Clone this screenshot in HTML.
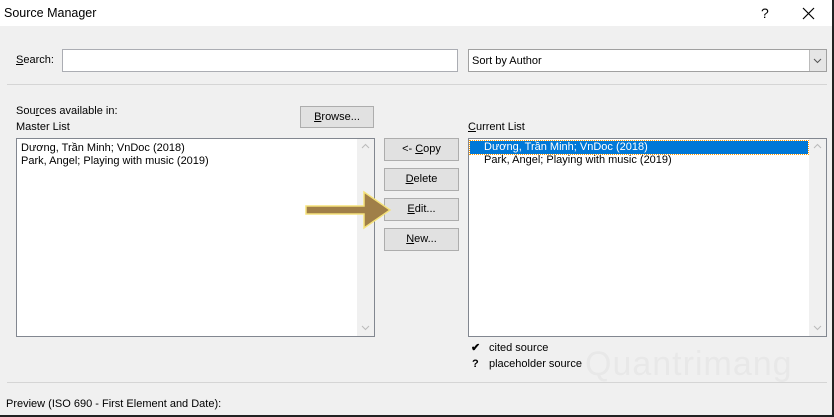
<!DOCTYPE html><html><head><style>
*{margin:0;padding:0;box-sizing:border-box}
body{width:834px;height:417px;overflow:hidden;background:#f0f0f0;font-family:"Liberation Sans",sans-serif;font-size:11px;color:#000;position:relative}
.a{position:absolute}
.win{position:absolute;left:0;top:0;width:834px;height:417px;border-right:2px solid #222;border-bottom:2px solid #222}
.btn{position:absolute;background:#e1e1e1;border:1px solid #adadad;text-align:center;line-height:21px}
.box{position:absolute;background:#fff;border:1px solid #abadb3}
u{text-decoration:underline}
</style></head><body>
<div class="a" style="left:0;top:0;width:834px;height:26px;background:#fff"></div>
<div class="a" style="left:4px;top:6px;font-size:12.5px">Source Manager</div>
<div class="a" style="left:761px;top:5px;font-size:14px">?</div>
<svg class="a" style="left:802px;top:7px" width="13" height="13"><path d="M1 1L12 12M12 1L1 12" stroke="#000" stroke-width="1.2"/></svg>
<div class="a" style="left:16px;top:54px"><u>S</u>earch:</div>
<div class="box" style="left:62px;top:49px;width:396px;height:23px"></div>
<div class="box" style="left:468px;top:49px;width:359px;height:23px;border-color:#a0a0a0"><span style="position:absolute;left:3px;top:5px">Sort by Author</span>
<div class="a" style="right:0;top:0;width:17px;height:21px;background:#e5e5e5;border-left:1px solid #bbb"></div>
<svg class="a" style="right:4px;top:8px" width="9" height="6"><path d="M1 1L4.5 4.5L8 1" stroke="#555" fill="none"/></svg></div>
<div class="a" style="left:7px;top:84px;width:820px;height:1px;background:#d5d5d5"></div>
<div class="a" style="left:16px;top:105px">Sou<u>r</u>ces available in:</div>
<div class="a" style="left:16px;top:121px">Master List</div>
<div class="btn" style="left:300px;top:106px;width:74px;height:22px"><u>B</u>rowse...</div>
<div class="box" style="left:16px;top:138px;width:359px;height:199px;border-color:#828790">
<div class="a" style="left:4px;top:3px;line-height:13px">Dương, Trần Minh; VnDoc (2018)<br>Park, Angel; Playing with music (2019)</div>
<div class="a" style="right:0;top:0;width:17px;height:197px;background:#f0f0f0"></div>
<svg class="a" style="right:4px;top:4px" width="9" height="6"><path d="M1 5L4.5 1.5L8 5" stroke="#bbb" fill="none"/></svg>
<svg class="a" style="right:4px;bottom:5px" width="9" height="6"><path d="M1 1L4.5 4.5L8 1" stroke="#bbb" fill="none"/></svg></div>
<div class="btn" style="left:384px;top:138px;width:75px;height:23px">&lt;- <u>C</u>opy</div>
<div class="btn" style="left:384px;top:168px;width:75px;height:23px"><u>D</u>elete</div>
<div class="btn" style="left:384px;top:198px;width:75px;height:23px"><u>E</u>dit...</div>
<div class="btn" style="left:384px;top:228px;width:75px;height:23px"><u>N</u>ew...</div>
<div class="a" style="left:468px;top:121px"><u>C</u>urrent List</div>
<div class="box" style="left:468px;top:138px;width:359px;height:199px;border-color:#828790">
<div class="a" style="left:1px;top:2px;width:338px;height:13px;background:#0078d7;outline:1px dotted #f90"></div>
<div class="a" style="left:15px;top:2px;line-height:13px"><span style="color:#fff">Dương, Trần Minh; VnDoc (2018)</span><br>Park, Angel; Playing with music (2019)</div>
<div class="a" style="right:0;top:0;width:17px;height:197px;background:#f0f0f0"></div>
<svg class="a" style="right:4px;top:4px" width="9" height="6"><path d="M1 5L4.5 1.5L8 5" stroke="#bbb" fill="none"/></svg>
<svg class="a" style="right:4px;bottom:5px" width="9" height="6"><path d="M1 1L4.5 4.5L8 1" stroke="#bbb" fill="none"/></svg></div>
<div class="a" style="left:471px;top:341px;font-weight:bold">✔</div>
<div class="a" style="left:489px;top:342px">cited source</div>
<div class="a" style="left:472px;top:358px;font-weight:bold">?</div>
<div class="a" style="left:489px;top:358px">placeholder source</div>
<div class="a" style="left:585px;top:345px;font-size:34px;color:#e8e8e8;letter-spacing:1px">Quantrimang</div>
<div class="a" style="left:7px;top:382px;width:820px;height:1px;background:#d5d5d5"></div>
<div class="a" style="left:6px;top:398px">Preview (ISO 690 - First Element and Date):</div>
<svg class="a" style="left:300px;top:188px" width="95" height="45"><path d="M6 18H64V4L90 22L64 40V26H6Z" fill="#a07f48" stroke="#f5e27a" stroke-width="1.5"/></svg>
<div class="win"></div>
</body></html>
